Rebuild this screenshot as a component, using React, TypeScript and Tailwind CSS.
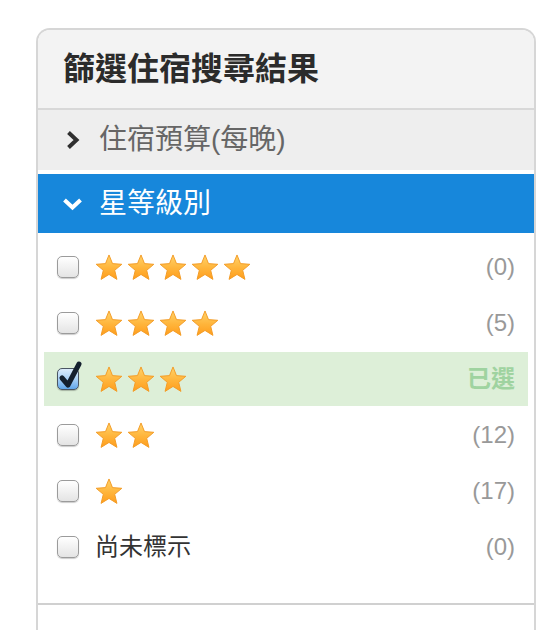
import React from 'react';

interface StarRow {
  stars: number;
  label?: string;
  count: string;
  checked?: boolean;
}

const rows: StarRow[] = [
  { stars: 5, count: '(0)' },
  { stars: 4, count: '(5)' },
  { stars: 3, count: '已選', checked: true },
  { stars: 2, count: '(12)' },
  { stars: 1, count: '(17)' },
  { stars: 0, label: '尚未標示', count: '(0)' },
];

const Star: React.FC<{ id: string }> = ({ id }) => (
  <svg width="28" height="27" viewBox="-0.5 -0.5 29 28" aria-hidden="true">
    <defs>
      <linearGradient id={id} x1="0" y1="0" x2="0" y2="1">
        <stop offset="0%" stopColor="#ffd36a" />
        <stop offset="55%" stopColor="#ffb43a" />
        <stop offset="100%" stopColor="#ff9d1c" />
      </linearGradient>
    </defs>
    <polygon
      points="14,0.5 17.64,9.48 27.31,10.17 19.9,16.42 22.23,25.83 14,20.7 5.77,25.83 8.1,16.42 0.69,10.17 10.36,9.48"
      fill={`url(#${id})`}
      stroke="#f39b25"
      strokeWidth={1}
      strokeLinejoin="round"
    />
  </svg>
);

const Checkbox: React.FC<{ checked?: boolean }> = ({ checked }) => (
  <div className="relative w-[22px] h-[22px] shrink-0">
    {checked ? (
      <div className="w-[22px] h-[22px] rounded-[5px] border border-[#4a5563] bg-gradient-to-b from-[#dcecfb] via-[#a9d0f5] to-[#5fa6ea] shadow-[0_1px_1px_rgba(0,0,0,0.25)]" />
    ) : (
      <div className="w-[22px] h-[22px] rounded-[5px] border border-[#9b9b9b] bg-gradient-to-b from-[#ffffff] to-[#e4e4e4] shadow-[0_1px_1px_rgba(0,0,0,0.2)]" />
    )}
    {checked && (
      <svg
        className="absolute left-[1px] top-[-8px]"
        width="26"
        height="30"
        viewBox="0 0 26 30"
        aria-hidden="true"
      >
        <path
          d="M4 18 L10 25 L21 4"
          fill="none"
          stroke="#14202e"
          strokeWidth={5}
          strokeLinecap="round"
          strokeLinejoin="round"
        />
      </svg>
    )}
  </div>
);

export default function App() {
  return (
    <div className="w-[552px] h-[630px] overflow-hidden bg-white pl-[36px] pt-[28px] font-['Liberation_Sans','Noto_Sans_CJK_TC',sans-serif]">
      <div className="w-[500px] border-2 border-b-0 border-[#d6d6d6] rounded-t-[14px] overflow-hidden bg-white">
        {/* header */}
        <div className="h-[80px] bg-[#f3f3f3] border-b-2 border-[#d8d8d8] flex items-center pl-[25px]">
          <h2 className="text-[32px] font-bold text-[#2b2b2b] leading-none">篩選住宿搜尋結果</h2>
        </div>

        {/* collapsed: budget */}
        <div className="h-[60px] bg-[#eeeeee] flex items-center mb-[4px]">
          <svg className="ml-[28px]" width="14" height="20" viewBox="0 0 14 20" aria-hidden="true">
            <path d="M2.5 2.5 L10.5 10 L2.5 17.5" fill="none" stroke="#2f2f2f" strokeWidth={4} strokeLinejoin="miter" />
          </svg>
          <span className="ml-[19px] text-[28px] text-[#666666] leading-none">住宿預算(每晚)</span>
        </div>

        {/* expanded: stars */}
        <div className="h-[59px] bg-[#1787db] flex items-center">
          <svg className="ml-[24px]" width="21" height="14" viewBox="0 0 21 14" aria-hidden="true">
            <path d="M2.5 3 L10.5 10.5 L18.5 3" fill="none" stroke="#ffffff" strokeWidth={4} />
          </svg>
          <span className="ml-[16px] text-[28px] text-white leading-none">星等級別</span>
        </div>

        <div className="flex flex-col pt-[6px] pb-[28px]">
          {rows.map((row, i) => (
            <div key={i} className="h-[56px] py-[1px] px-[6px]">
              <div
                className={`h-full flex items-center pl-[13px] pr-[13px] ${row.checked ? 'bg-[#ddefd8]' : ''}`}
              >
                <Checkbox checked={row.checked} />
                <div className="ml-[16px] flex items-center gap-[4px] flex-1">
                  {row.label ? (
                    <span className="text-[24px] text-[#333333] leading-none">{row.label}</span>
                  ) : (
                    Array.from({ length: row.stars }).map((_, s) => <Star key={s} id={`star-${i}-${s}`} />)
                  )}
                </div>
                <span
                  className={`text-[24px] leading-none ${row.checked ? 'text-[#9fd3a0] font-bold' : 'text-[#999999]'}`}
                >
                  {row.count}
                </span>
              </div>
            </div>
          ))}
        </div>

        <div className="border-t-2 border-[#d0d0d0] h-[40px]" />
      </div>
    </div>
  );
}
